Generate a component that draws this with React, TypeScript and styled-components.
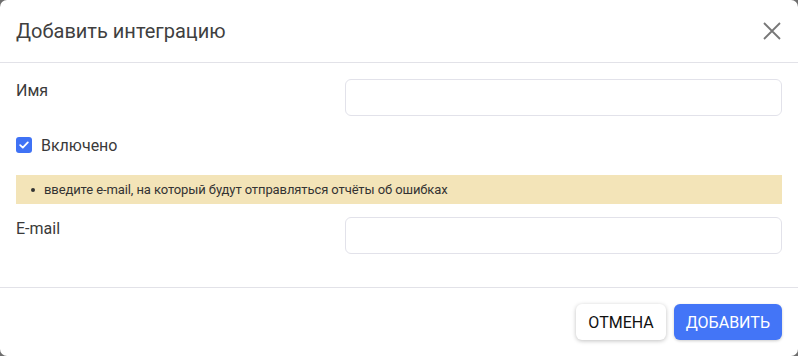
import styled, { createGlobalStyle } from "styled-components";

const GlobalStyle = createGlobalStyle`
  html, body {
    margin: 0;
    padding: 0;
    background: #6e6e6e;
  }
  * {
    box-sizing: border-box;
  }
`;

const Dialog = styled.div`
  width: 798px;
  height: 356px;
  background: #fff;
  border-radius: 7px;
  font-family: Roboto, "Liberation Sans", sans-serif;
  color: #333;
  display: flex;
  flex-direction: column;
  overflow: hidden;
`;

const Header = styled.div`
  height: 63px;
  display: flex;
  align-items: center;
  justify-content: space-between;
  padding: 0 16px;
  border-bottom: 1px solid #e2e2e8;
`;

const Title = styled.h2`
  margin: 0;
  font-size: 20px;
  font-weight: 400;
  color: #3f3f3f;
`;

const CloseButton = styled.button`
  width: 20px;
  height: 20px;
  padding: 0;
  border: none;
  background: transparent;
  display: flex;
  align-items: center;
  justify-content: center;
  cursor: pointer;
`;

const Body = styled.div`
  flex: 1;
  padding: 16px 16px 0;
  display: flex;
  flex-direction: column;
`;

const FieldRow = styled.div<{ $mb?: number }>`
  display: grid;
  grid-template-columns: 329px 1fr;
  align-items: start;
  margin-bottom: ${(p) => p.$mb ?? 0}px;
`;

const Label = styled.label`
  font-size: 16px;
  line-height: 20px;
  padding-top: 2px;
  color: #3a3a3a;
`;

const Input = styled.input`
  height: 37px;
  width: 100%;
  border: 1px solid #e2e2ea;
  border-radius: 6px;
  outline: none;
  font-size: 15px;
  padding: 0 10px;
  font-family: inherit;
`;

const CheckRow = styled.label`
  display: flex;
  align-items: center;
  gap: 9px;
  font-size: 16px;
  color: #3a3a3a;
  height: 20px;
  margin-bottom: 20px;
`;

const CheckBox = styled.span`
  width: 16px;
  height: 16px;
  border-radius: 3px;
  background: #3f72f5;
  display: flex;
  align-items: center;
  justify-content: center;
`;

const Hint = styled.ul`
  margin: 0 0 13px;
  padding: 0 0 0 15px;
  height: 29px;
  background: #f3e4b8;
  display: flex;
  align-items: center;
  font-size: 13px;
  color: #333;
`;

const HintItem = styled.li`
  list-style: none;
  display: flex;
  align-items: center;
  gap: 9px;
  letter-spacing: -0.1px;

  &::before {
    content: "";
    width: 4px;
    height: 4px;
    border-radius: 50%;
    background: #333;
    flex-shrink: 0;
  }
`;

const Footer = styled.div`
  height: 69px;
  border-top: 1px solid #e2e2e8;
  display: flex;
  align-items: center;
  justify-content: flex-end;
  gap: 8px;
  padding: 0 16px 0 0;
`;

const Button = styled.button<{ $primary?: boolean }>`
  height: 36px;
  padding: 0 12px;
  border: none;
  border-radius: 6px;
  font-family: Roboto, "Liberation Sans", sans-serif;
  font-size: 16px;
  text-transform: uppercase;
  cursor: pointer;
  background: ${(p) => (p.$primary ? "#4375f7" : "#fff")};
  color: ${(p) => (p.$primary ? "#fff" : "#111")};
  box-shadow: ${(p) =>
    p.$primary ? "0 1px 3px rgba(0,0,0,0.2)" : "0 1px 4px rgba(0,0,0,0.25)"};
`;

export default function App() {
  return (
    <>
      <GlobalStyle />
      <Dialog>
        <Header>
          <Title>Добавить интеграцию</Title>
          <CloseButton>
            <svg width="18" height="18" viewBox="0 0 18 18">
              <path d="M1 1L17 17M17 1L1 17" stroke="#777" strokeWidth="1.8" />
            </svg>
          </CloseButton>
        </Header>
        <Body>
          <FieldRow $mb={19}>
            <Label>Имя</Label>
            <Input />
          </FieldRow>
          <CheckRow>
            <CheckBox>
              <svg width="10" height="8" viewBox="0 0 10 8">
                <path d="M1.2 4.2L3.8 6.6L8.8 1.4" stroke="#fff" strokeWidth="1.8" fill="none" strokeLinecap="round" strokeLinejoin="round" />
              </svg>
            </CheckBox>
            Включено
          </CheckRow>
          <Hint>
            <HintItem>введите e-mail, на который будут отправляться отчёты об ошибках</HintItem>
          </Hint>
          <FieldRow>
            <Label>E-mail</Label>
            <Input type="email" />
          </FieldRow>
        </Body>
        <Footer>
          <Button>Отмена</Button>
          <Button $primary>Добавить</Button>
        </Footer>
      </Dialog>
    </>
  );
}
